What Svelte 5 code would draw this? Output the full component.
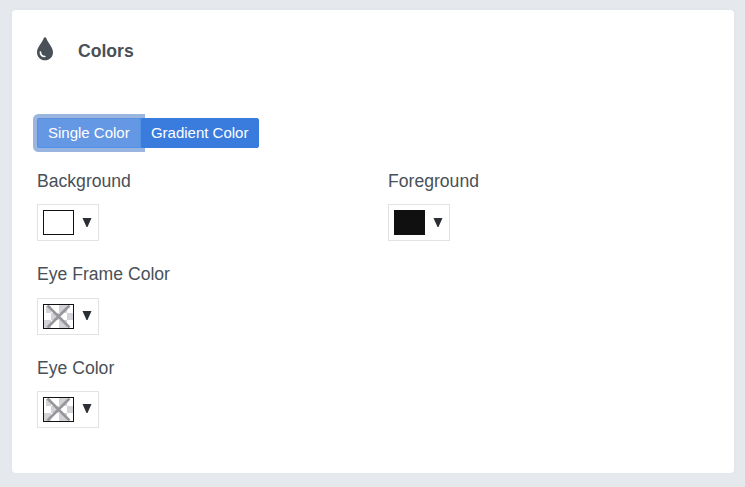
<script>
  let mode = $state('single');

  const modes = [
    { id: 'single', label: 'Single Color' },
    { id: 'gradient', label: 'Gradient Color' },
  ];

  const pickers = [
    { label: 'Background', color: '#ffffff' },
    { label: 'Foreground', color: '#101010' },
    { label: 'Eye Frame Color', color: null },
    { label: 'Eye Color', color: null },
  ];
</script>

<div class="card">
  <div class="card-header">
    <svg class="drop-icon" width="18" height="24" viewBox="0 0 18 24">
      <path fill="#495057" d="M9 0.2C9.6 0.2 10 0.5 10.2 1.1C11.7 6.1 17 9.9 17 15.4C17 19.8 13.5 23.2 9 23.2C4.5 23.2 1 19.8 1 15.4C1 9.9 6.3 6.1 7.8 1.1C8 0.5 8.4 0.2 9 0.2Z" />
      <path class="shine" d="M4.4 15C4.5 17.8 6.3 19.4 8.8 19.5" />
    </svg>
    <h2>Colors</h2>
  </div>

  <div class="btn-group">
    {#each modes as item}
      <button class="btn" class:active={mode === item.id} onclick={() => (mode = item.id)}>{item.label}</button>
    {/each}
  </div>

  <div class="pickers">
    {#each pickers as picker, i}
      <div class="picker" class:wide={i > 1}>
        <span class="picker-label">{picker.label}</span>
        <button class="replacer" aria-label={picker.label}>
          {#if picker.color}
            <span class="preview" style="background: {picker.color}"></span>
          {:else}
            <!-- no color chosen -->
            <svg class="preview" width="31" height="25" viewBox="0 0 29 23">
              <rect width="29" height="23" fill="#fff" />
              <path fill="#d3d3d7" d="M2 1h5v7H2zM15 0h8v8h-8zM7 8h8v7H7zM23 8h6v7h-6zM0 15h7v8H0zM15 15h8v8h-8z" />
              <path d="M3.5 0.5L25.5 22.5M25.5 0.5L3.5 22.5" stroke="#97979b" stroke-width="2.7" />
            </svg>
          {/if}
          <svg class="arrow" width="10" height="9" viewBox="0 0 10 9">
            <path fill="#2b2e32" d="M0.5 0H9.5L5.5 9H4.5Z" />
          </svg>
        </button>
      </div>
    {/each}
  </div>
</div>

<style>
  :global(body) {
    background: #e5e9ee;
    font-family: "Liberation Sans", Arial, sans-serif;
    color: #495057;
  }

  .card {
    box-sizing: border-box;
    width: 722px;
    height: 463px;
    margin: 10px 0 0 12px;
    padding: 26px 20px 0 25px;
    background: #fff;
    border-radius: 4px;
    box-shadow: 0 0 5px rgba(0, 0, 0, 0.03);
  }
  :global(#app) {
    display: flow-root;
  }

  .card-header {
    display: flex;
    align-items: center;
    height: 28px;
  }
  .drop-icon {
    margin: -2px 24px 0 -1px;
  }
  .shine {
    fill: none;
    stroke: #fff;
    stroke-width: 1.7;
    stroke-linecap: round;
  }
  h2 {
    margin: 2px 0 0;
    font-size: 17.6px;
    line-height: 24px;
    font-weight: bold;
  }

  /* Mode toggle */
  .btn-group {
    display: flex;
    margin-top: 54px;
  }
  .btn {
    height: 30px;
    padding: 0 9.2px;
    border: 1px solid #3a7cdd;
    border-radius: 0 2px 2px 0;
    background: #3a7cdd;
    color: #fff;
    font-family: inherit;
    font-size: 15px;
    line-height: 28px;
    white-space: nowrap;
  }
  .btn:first-child {
    padding: 0 10px;
    border-radius: 2px 0 0 2px;
  }
  .btn.active {
    background: #6497e4;
    border: 1px dotted #468be5;
    box-shadow: 0 0 0 4px #99b5e0;
  }
  .btn:last-child {
    position: relative;
  }

  /* Color pickers */
  .pickers {
    display: grid;
    grid-template-columns: 351px 1fr;
    margin-top: 21px;
    row-gap: 20.4px;
  }
  .picker {
    height: 73px;
  }
  .wide {
    grid-column: 1 / -1;
  }
  .picker-label {
    display: block;
    height: 24px;
    margin-bottom: 11.2px;
    font-size: 17.6px;
    line-height: 24px;
  }
  .replacer {
    display: flex;
    align-items: center;
    box-sizing: border-box;
    width: 62px;
    height: 37px;
    padding: 0 5px;
    border: 1px solid #e1e2e5;
    background: #fff;
  }
  .preview {
    box-sizing: border-box;
    flex: none;
    width: 31px;
    height: 25px;
    border: 1px solid #111;
  }
  .arrow {
    flex: none;
    margin-left: 8px;
    margin-top: -1px;
  }
</style>
